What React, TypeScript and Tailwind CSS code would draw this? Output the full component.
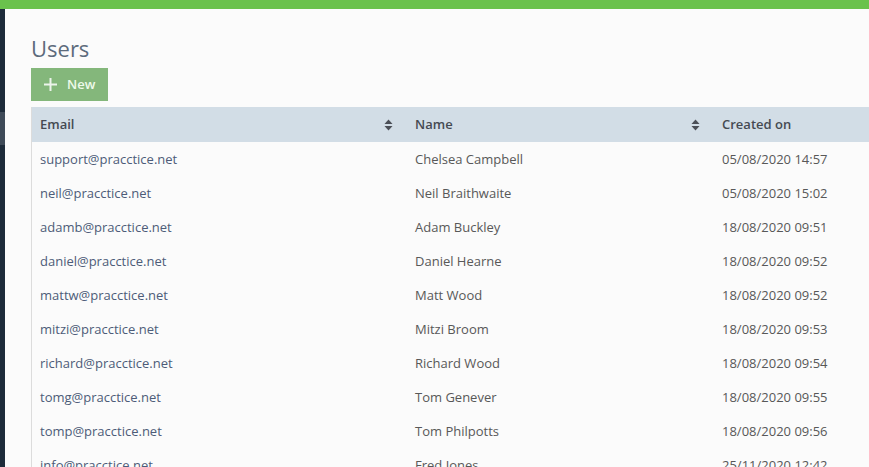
import React from "react";

const rows = [
  ["support@pracctice.net", "Chelsea Campbell", "05/08/2020 14:57"],
  ["neil@pracctice.net", "Neil Braithwaite", "05/08/2020 15:02"],
  ["adamb@pracctice.net", "Adam Buckley", "18/08/2020 09:51"],
  ["daniel@pracctice.net", "Daniel Hearne", "18/08/2020 09:52"],
  ["mattw@pracctice.net", "Matt Wood", "18/08/2020 09:52"],
  ["mitzi@pracctice.net", "Mitzi Broom", "18/08/2020 09:53"],
  ["richard@pracctice.net", "Richard Wood", "18/08/2020 09:54"],
  ["tomg@pracctice.net", "Tom Genever", "18/08/2020 09:55"],
  ["tomp@pracctice.net", "Tom Philpotts", "18/08/2020 09:56"],
  ["info@pracctice.net", "Fred Jones", "25/11/2020 12:42"],
  ["info2@pracctice.net", "Someone", "25/11/2020 12:43"],
];

function SortIcon() {
  return (
    <svg width="9" height="12" viewBox="0 0 9 12">
      <path d="M4.5 0.5 L8.5 5 L0.5 5 Z" fill="#4b4f57" />
      <path d="M0.5 7 L8.5 7 L4.5 11.5 Z" fill="#4b4f57" />
    </svg>
  );
}

export default function App() {
  return (
    <div
      className="w-[869px] h-[467px] overflow-hidden bg-[#fbfbfb] flex flex-col"
      style={{ fontFamily: '"Open Sans", sans-serif' }}
    >
      <div className="h-[9px] bg-[#6ac24c] shrink-0" />
      <div className="flex flex-1 min-h-0">
        <div className="w-[5px] shrink-0 bg-[#1d2b3a] flex flex-col">
          <div className="h-[103px]" />
          <div className="h-[33px] bg-[#3e4a58]" />
        </div>
        <div className="flex-1 pl-[26px] pt-[24px] min-w-0">
          <h1 className="text-[22px] leading-[30px] text-[#5d6b7c] font-normal">Users</h1>
          <button className="mt-[5px] w-[77px] h-[33px] bg-[#84b77b] flex items-center pl-[12px] gap-[9px] text-white text-[13px] font-semibold">
            <svg width="15" height="15" viewBox="0 0 15 15">
              <path d="M7.5 1 V14 M1 7.5 H14" stroke="#ffffff" strokeWidth="2" opacity="0.85" />
            </svg>
            <span className="text-[#eefaea]">New</span>
          </button>
          <div className="mt-[6px] w-[1000px] border-l border-[#dcdcdc]">
            <div className="flex h-[35px] bg-[#d2dde6] items-center text-[13px] font-semibold text-[#454a52]">
              <div className="w-[375px] pl-[8px] pr-[14px] flex items-center justify-between">
                <span>Email</span>
                <SortIcon />
              </div>
              <div className="w-[307px] pl-[8px] pr-[14px] flex items-center justify-between">
                <span>Name</span>
                <SortIcon />
              </div>
              <div className="flex-1 pl-[8px]">Created on</div>
            </div>
            {rows.map((r, i) => (
              <div key={i} className="flex h-[34px] pt-[2px] items-center text-[13px]">
                <div className="w-[375px] pl-[8px] text-[#4d5c78]">{r[0]}</div>
                <div className="w-[307px] pl-[8px] text-[#585858]">{r[1]}</div>
                <div className="flex-1 pl-[8px] text-[#585858]">{r[2]}</div>
              </div>
            ))}
          </div>
        </div>
      </div>
    </div>
  );
}
